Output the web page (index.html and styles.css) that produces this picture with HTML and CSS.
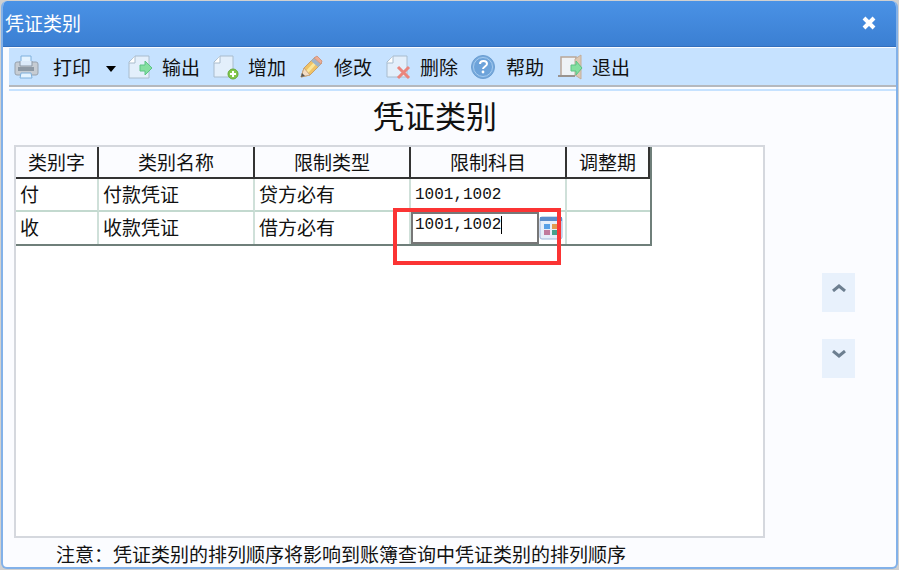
FILE: index.html
```html
<!DOCTYPE html>
<html lang="zh-CN">
<head>
    <meta charset="UTF-8">
    <meta name="viewport" content="width=device-width, initial-scale=1.0">
    <title>凭证类别</title>
    <link rel="stylesheet" href="styles.css">
</head>
<body>
    <div class="window">
        <header class="titlebar">
            <span>凭证类别</span>
            <button type="button" class="close" aria-label="关闭">
                <svg width="14" height="14" viewBox="0 0 14 14"><path d="M2 2l10 10M12 2L2 12" stroke="#fff" stroke-width="4"/></svg>
            </button>
        </header>

        <nav class="toolbar">
            <button type="button" class="print">
                <svg class="icon" viewBox="0 0 24 24">
                    <path d="M7 1h10v7H7z" fill="#e4f3ff" stroke="#7fb0dc"/>
                    <rect x="1" y="7" width="23" height="13" rx="2" fill="#c6ccd3" stroke="#97a2ae"/>
                    <path d="M6 6v5h12V6" fill="#dbeafa" stroke="#8b98a6"/>
                    <path d="M4 12h16v4H4z" fill="#8d99a5"/>
                    <path d="M7 18h10l1 5H6z" fill="#e4f3ff" stroke="#7fb0dc"/>
                </svg>
                打印
                <svg class="caret" width="10" height="6" viewBox="0 0 10 6"><path d="M0 0h10L5 6z" fill="#000"/></svg>
            </button>
            <button type="button">
                <svg class="icon" viewBox="0 0 24 24">
                    <path d="M7 1h14v22H1V7z" fill="#e3effb" stroke="#a9bccd"/>
                    <path d="M1 8h6V1" fill="#fff" stroke="#a9bccd"/>
                    <path d="M12 10h5V6l7 7-7 7v-4h-5z" fill="#84dfa0" stroke="#5cc486"/>
                </svg>
                输出
            </button>
            <button type="button">
                <svg class="icon" viewBox="0 0 24 24">
                    <path d="M6 1h13v21H0V7z" fill="#e3effb" stroke="#a9bccd"/>
                    <path d="M0 8h6V1" fill="#fff" stroke="#a9bccd"/>
                    <circle cx="19" cy="19" r="5" fill="#83c74b" stroke="#65aa38"/>
                    <path d="M19 16v6M16 19h6" stroke="#fff" stroke-width="2"/>
                </svg>
                增加
            </button>
            <button type="button">
                <svg class="icon" viewBox="0 0 24 24">
                    <path d="M1 22l3-9L15 2l7 6-12 12z" fill="#f0c365" stroke="#c79f6b"/>
                    <path d="M7 17L18 5" stroke="#fbe79a" stroke-width="3"/>
                    <path d="M1 22l3-9 6 7z" fill="#f3dcc3" stroke="#c7a67e"/>
                    <path d="M1 22l1-4 3 3z" fill="#555"/>
                    <path d="M11 6l7 6 3-3-7-6z" fill="#9eb4ca"/>
                    <path d="M14 3l3-2 5 5-1 3z" fill="#eeac95" stroke="#cf9a85"/>
                </svg>
                修改
            </button>
            <button type="button">
                <svg class="icon" viewBox="0 0 24 24">
                    <path d="M7 1h14v21H1V7z" fill="#e3effb" stroke="#a9bccd"/>
                    <path d="M1 8h6V1" fill="#fff" stroke="#a9bccd"/>
                    <path d="M12 12l11 11M23 12L12 23" stroke="#ea857d" stroke-width="3"/>
                </svg>
                删除
            </button>
            <button type="button">
                <svg class="icon" viewBox="0 0 24 24">
                    <circle cx="11" cy="12" r="11.5" fill="#76a9dc" stroke="#6b9ed2"/>
                    <circle cx="11" cy="12" r="9.5" fill="#6da3da" stroke="#a5cbef"/>
                    <path d="M8 9c0-4 7-4 7 0 0 2-4 3-4 5" fill="none" stroke="#fff" stroke-width="2"/>
                    <circle cx="11" cy="17" r="1.4" fill="#fff"/>
                </svg>
                帮助
            </button>
            <button type="button">
                <svg class="icon" viewBox="0 0 24 24">
                    <path d="M3 21V2h15v19" fill="#eef2f6" stroke="#b9a698" stroke-width="1.5"/>
                    <path d="M17 4l6-4v24l-6-4z" fill="#dcc8b4" stroke="#c3ae9a"/>
                    <path d="M0 21h17" stroke="#99938f" stroke-width="2"/>
                    <path d="M13 10h5V6l6 7-6 7v-4h-5z" fill="#84dfa0" stroke="#5cc486"/>
                </svg>
                退出
            </button>
        </nav>

        <main>
            <h1>凭证类别</h1>
            <div class="content">
                <div class="panel">
                    <table>
                        <colgroup>
                            <col class="col-word"><col class="col-wide"><col class="col-wide"><col class="col-wide"><col class="col-word">
                        </colgroup>
                        <thead>
                            <tr>
                                <th>类别字</th>
                                <th>类别名称</th>
                                <th>限制类型</th>
                                <th>限制科目</th>
                                <th>调整期</th>
                            </tr>
                        </thead>
                        <tbody>
                            <tr>
                                <td>付</td>
                                <td>付款凭证</td>
                                <td>贷方必有</td>
                                <td class="code">1001,1002</td>
                                <td></td>
                            </tr>
                            <tr>
                                <td>收</td>
                                <td>收款凭证</td>
                                <td>借方必有</td>
                                <td class="editing">
                                    <div class="editor">
                                        <input type="text" value="1001,1002" aria-label="限制科目">
                                        <span class="cursor"></span>
                                        <button type="button" aria-label="选择科目">
                                            <svg width="24" height="24" viewBox="0 0 24 24">
                                                <rect x="1" y="1" width="22" height="22" rx="2" fill="#e6eefa" stroke="#9db5da"/>
                                                <path d="M1 1h22v4H1z" fill="#5b8dcb"/>
                                                <path d="M5 8h6v5H5z" fill="#58a0e6"/>
                                                <path d="M13 8h6v5h-6z" fill="#e29a50"/>
                                                <path d="M5 14h6v5H5z" fill="#c07a9d"/>
                                                <path d="M13 14h6v5h-6z" fill="#48a08c"/>
                                            </svg>
                                        </button>
                                    </div>
                                    <div class="highlight"></div>
                                </td>
                                <td></td>
                            </tr>
                        </tbody>
                    </table>
                </div>
                <div class="order">
                    <button type="button" aria-label="上移">
                        <svg width="14" height="8" viewBox="0 0 14 8"><path d="M1 7l6-5 6 5" fill="none" stroke="#6d7f90" stroke-width="3"/></svg>
                    </button>
                    <button type="button" aria-label="下移">
                        <svg width="14" height="8" viewBox="0 0 14 8"><path d="M1 1l6 5 6-5" fill="none" stroke="#6d7f90" stroke-width="3"/></svg>
                    </button>
                </div>
            </div>
            <p class="note">注意：凭证类别的排列顺序将影响到账簿查询中凭证类别的排列顺序</p>
        </main>
    </div>
</body>
</html>
```
FILE: styles.css
```css
* {
    box-sizing: border-box;
}

body {
    margin: 0;
    padding: 1px;
    background: #d0d0d0;
    font-family: "Noto Sans CJK SC", sans-serif;
    font-size: 19px;
    line-height: 24px;
    color: #111;
}

button {
    border: 0;
    padding: 0;
    background: none;
    font: inherit;
    color: inherit;
}

svg {
    display: block;
}

.window {
    display: flex;
    flex-direction: column;
    min-height: calc(100vh - 2px);
    border: 2px solid #82b1e9;
    border-top: 0;
    border-radius: 6px;
    background: #fbfcff;
    overflow: hidden;
}

.titlebar {
    display: flex;
    justify-content: space-between;
    align-items: center;
    height: 46px;
    margin: 0 -2px;
    padding: 0 22px 2px 4px;
    background: linear-gradient(#4a92e6, #3b7fd2);
    border-bottom: 1px solid #336fbd;
    color: #fff;
}

.toolbar {
    display: flex;
    align-items: center;
    height: 39px;
    margin: 1px 0 0 6px;
    padding-left: 5px;
    background: #c6e2ff;
    border-bottom: 2px solid #b4b8be;
}

.toolbar button {
    display: flex;
    align-items: center;
    gap: 10px;
    width: 86px;
}

.toolbar .print {
    gap: 15px;
    width: 114px;
}

.icon {
    width: 24px;
    height: 24px;
    overflow: visible;
}

.caret {
    margin-top: 4px;
}

main {
    flex: 1;
    display: flex;
    flex-direction: column;
    margin: 2px 0 0 6px;
    padding-left: 5px;
    border-top: 2px solid #c6e2ff;
}

h1 {
    margin: 0;
    padding: 4px 40px 10px 0;
    font-size: 31px;
    line-height: 40px;
    font-weight: 400;
    text-align: center;
}

.content {
    flex: 1;
    display: flex;
}

.panel {
    flex: 1;
    border: 2px solid #d5d8de;
    background: #fff;
}

table {
    width: 636px;
    table-layout: fixed;
    border-collapse: separate;
    border-spacing: 0;
    border-right: 2px solid #6f7f7a;
    border-bottom: 2px solid #6f7f7a;
}

.col-word {
    width: 83px;
}

.col-wide {
    width: 156px;
}

th {
    height: 32px;
    padding: 0;
    font-weight: 400;
    background: #fbfcff;
    border-right: 2px solid #333;
    border-bottom: 2px solid #333;
}

td {
    height: 33px;
    padding: 0 4px 2px;
    border-right: 2px solid #cfe0d9;
    border-bottom: 2px solid #c3d9cf;
}

td:last-child {
    border-right: 0;
}

tbody tr:last-child td {
    height: 32px;
    border-bottom: 0;
}

.code,
.editor input {
    font-family: "Liberation Mono", monospace;
    font-size: 16px;
}

.code {
    padding-bottom: 0;
}

td.editing {
    position: relative;
    padding: 0;
}

.editor {
    display: flex;
    height: 32px;
}

.editor input {
    width: 128px;
    padding: 0 2px 6px;
    border: 2px solid #777;
    border-radius: 0;
    background: #fff;
    color: #111;
    outline: 0;
}

.cursor {
    position: absolute;
    left: 90px;
    top: 4px;
    width: 1px;
    height: 18px;
    background: #000;
}

/* red frame around the cell being edited */
.highlight {
    position: absolute;
    left: -18px;
    top: -4px;
    width: 168px;
    height: 57px;
    border: 4px solid #fb3434;
    pointer-events: none;
}

.order {
    display: flex;
    flex-direction: column;
    justify-content: center;
    align-items: center;
    gap: 27px;
    width: 131px;
    padding: 0 0 32px 16px;
}

.order button {
    display: flex;
    justify-content: center;
    width: 33px;
    height: 39px;
    padding-top: 11px;
    background: #e8f1fc;
}

.note {
    margin: 0;
    padding: 4px 0 1px 42px;
}
```
